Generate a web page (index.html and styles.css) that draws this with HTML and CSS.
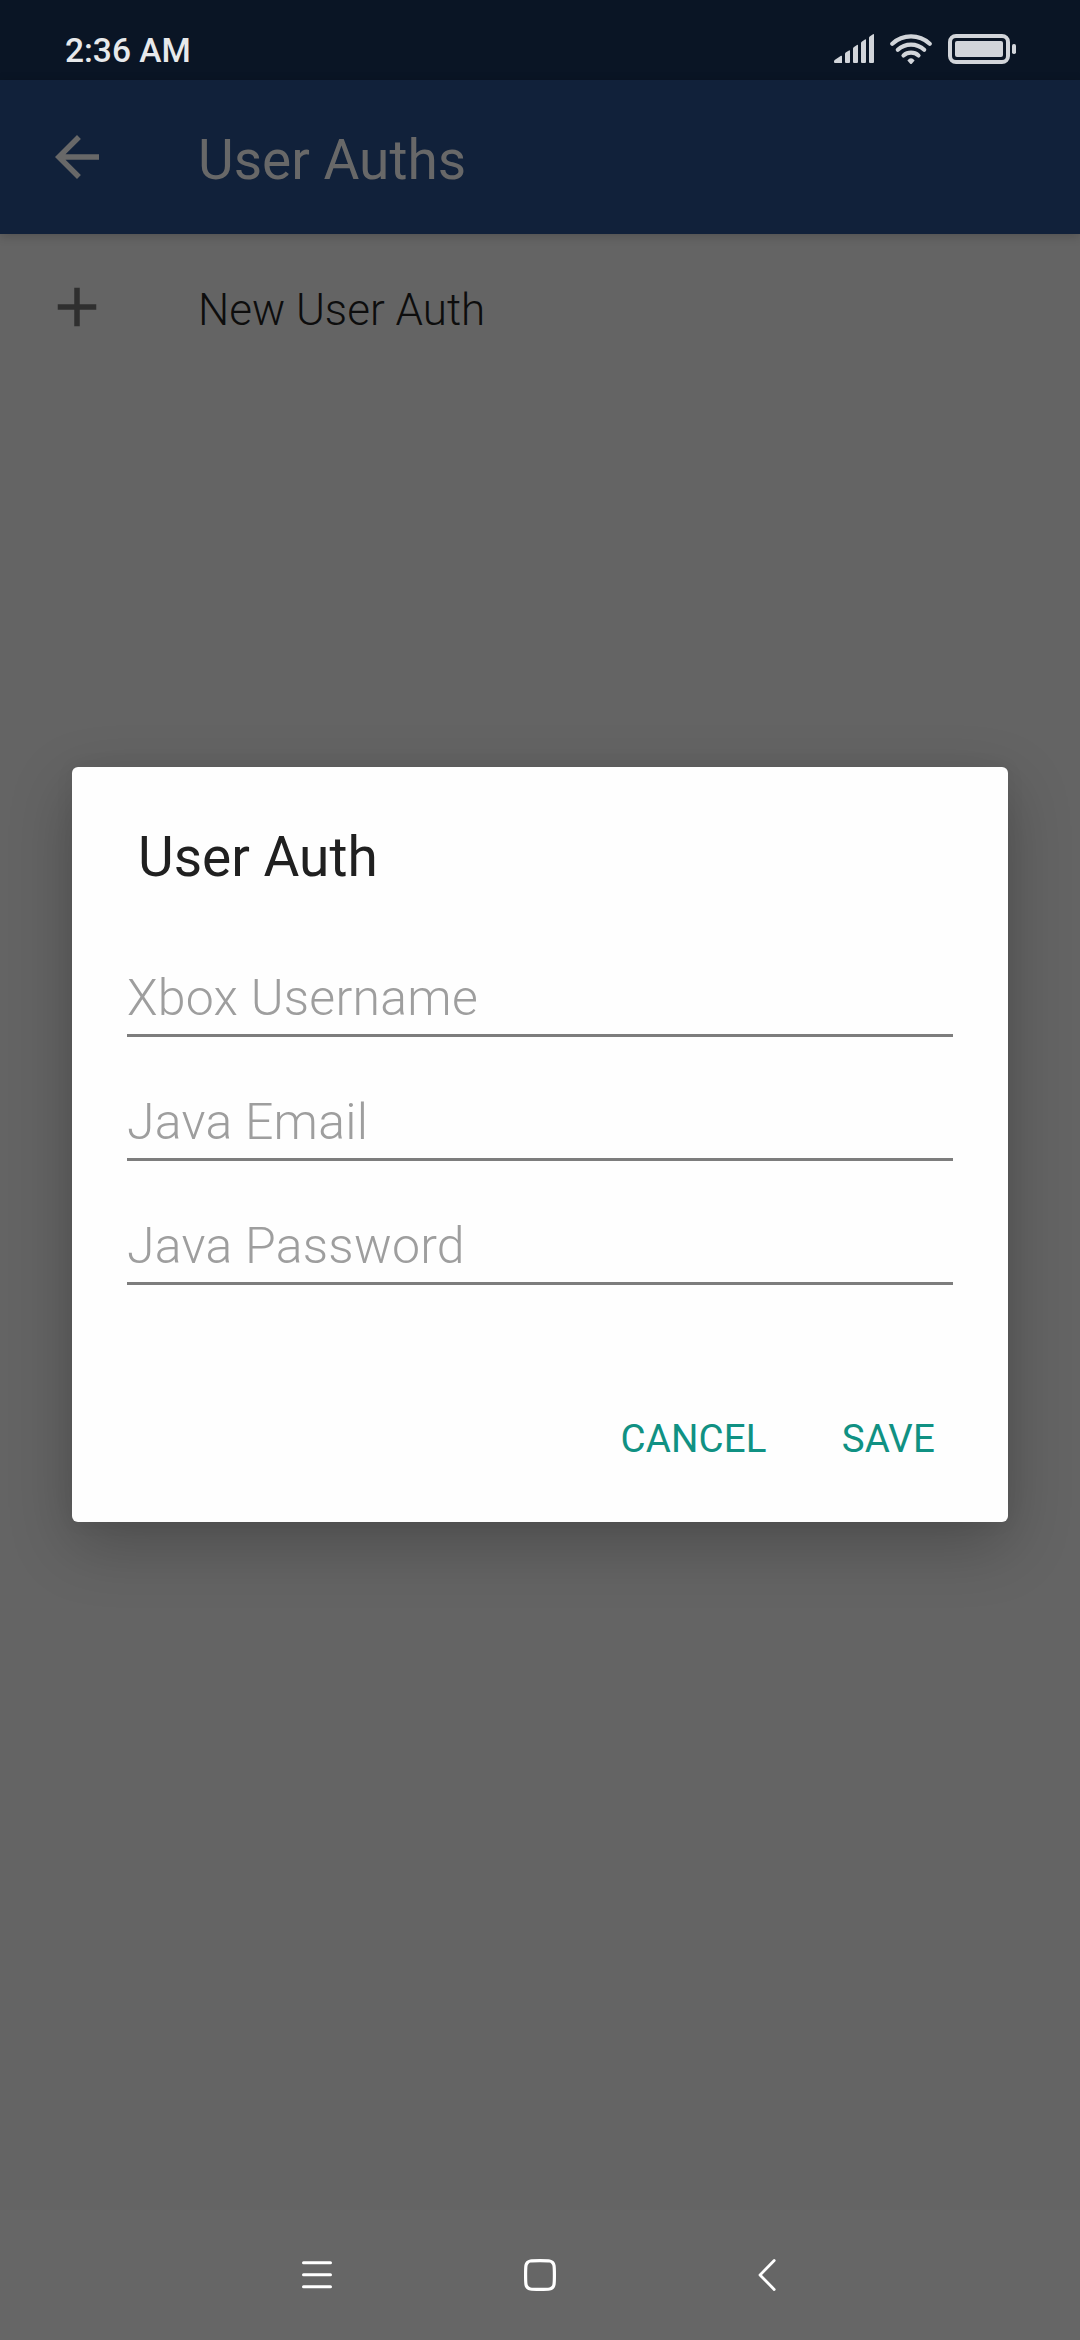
FILE: index.html
```html
<!DOCTYPE html>
<html lang="en">
<head>
<meta charset="utf-8">
<title>User Auths</title>
<link rel="stylesheet" href="styles.css">
</head>
<body>
<div class="screen">
  <header class="status-bar">
    <span class="clock">2:36 AM</span>
    <div class="status-icons">
      <svg class="signal" width="40" height="30" viewBox="0 0 40 30" fill="currentColor">
        <path d="M0 27.4Q0 26.4 1 25.8L7 21.8Q8 21.3 8 22.4V29H1Q0 29 0 28z"/>
        <path d="M11 20Q11 19 12 18.3L15 16.5Q16 16 16 17V28Q16 29 15 29H12Q11 29 11 28z"/>
        <path d="M19 14.5Q19 13.5 20 12.9L23 11Q24 10.5 24 11.5V28Q24 29 23 29H20Q19 29 19 28z"/>
        <path d="M27 9Q27 8 28 7.4L31 5.5Q32 5 32 6V28Q32 29 31 29H28Q27 29 27 28z"/>
        <path d="M35 3.8Q35 2.8 36 2.2L39 .2Q40-.3 40 .8V28Q40 29 39 29H36Q35 29 35 28z"/>
      </svg>
      <svg class="wifi" width="42" height="30" viewBox="0 0 42 30" fill="none" stroke="currentColor" stroke-width="4.2" stroke-linecap="round">
        <path d="M2.3 9.7A27.5 27.5 0 0 1 39.7 9.7"/>
        <path d="M7.8 15.8A19.5 19.5 0 0 1 34.2 15.8"/>
        <path d="M13.5 21.5A11.5 11.5 0 0 1 28.5 21.5"/>
        <path d="M17.4 26.4Q21 22.2 24.600 26.400L22 29.400Q21 30.400 20 29.400z" fill="currentColor" stroke="none"/>
      </svg>
      <svg class="battery" width="68" height="30" viewBox="0 0 68 30">
        <rect x="2" y="2" width="58" height="26" rx="6" fill="none" stroke="currentColor" stroke-width="4"/>
        <rect x="7" y="7" width="48" height="16" rx="2" fill="currentColor"/>
        <rect x="64" y="10" width="4" height="10" rx="1.8" fill="currentColor"/>
      </svg>
    </div>
  </header>
  <div class="app-bar">
    <svg class="icon" viewBox="0 0 24 24" fill="currentColor"><path d="M20 11H7.83l5.59-5.59L12 4l-8 8 8 8 1.41-1.41L7.83 13H20v-2z"/></svg>
    <h1 class="app-title">User Auths</h1>
  </div>
  <main class="content">
    <div class="list-row">
      <svg class="icon add" viewBox="0 0 24 24" fill="currentColor"><path d="M19 13h-6v6h-2v-6H5v-2h6V5h2v6h6v2z"/></svg>
      <span class="row-label">New User Auth</span>
    </div>
  </main>
  <nav class="nav-bar">
    <svg width="30" height="32" viewBox="0 0 30 32" fill="none" stroke="currentColor" stroke-width="3" stroke-linecap="round"><path d="M1.5 3.7h27M1.5 15.8h27M1.5 27.8h27"/></svg>
    <svg width="32" height="32" viewBox="0 0 32 32" fill="none" stroke="currentColor" stroke-width="3.2"><path d="M16 1.6C26.5 1.6 27 2 28.5 3.5 30 5 30.4 6 30.4 16S30 27 28.5 28.5 26.5 30.4 16 30.4 5 30 3.5 28.5 1.6 26.5 1.6 16 2 5 3.5 3.5 5.5 1.6 16 1.6z"/></svg>
    <svg width="18" height="32" viewBox="0 0 18 32" fill="none" stroke="currentColor" stroke-width="2.8" stroke-linecap="round" stroke-linejoin="round"><path d="M16.2 1.6L2 16l14.200 14.400"/></svg>
  </nav>
  <div class="overlay">
    <section class="dialog" role="dialog">
      <h2 class="dialog-title">User Auth</h2>
      <div class="fields">
        <div class="field">Xbox Username</div>
        <div class="field">Java Email</div>
        <div class="field">Java Password</div>
      </div>
      <div class="actions">
        <span class="action">CANCEL</span>
        <span class="action">SAVE</span>
      </div>
    </section>
  </div>
</div>
</body>
</html>
```
FILE: styles.css
```css
* { box-sizing: border-box; }
body { margin: 0; font-family: Roboto, sans-serif; }
h1, h2 { margin: 0; font-weight: 400; }
svg { display: block; flex: none; }

.screen {
  position: relative;
  display: flex;
  flex-direction: column;
  width: 1080px;
  height: 2340px;
  overflow: hidden;
  background: #646464;
}

.status-bar {
  display: flex;
  justify-content: space-between;
  height: 80px;
  padding: 30px 64px 0 65px;
  background: #0a1525;
  color: #d2d5da;
}
.clock {
  padding-top: 1px;
  color: #e7e9eb;
  font-size: 33.5px;
  font-weight: 500;
  line-height: 40px;
}
.status-icons { display: flex; align-items: flex-start; padding-top: 4px; }
.wifi { margin-left: 16px; }
.battery { margin-left: 16px; }

.app-bar {
  display: flex;
  align-items: center;
  height: 154px;
  padding: 0 44px;
  gap: 88px;
  background: #11213a;
  color: #686868;
  box-shadow: 0 2px 10px rgba(0, 0, 0, .2);
}
.icon { width: 66px; height: 66px; }
.app-title { padding-top: 6px; font-size: 55px; line-height: 64px; }

.content { flex: 1; }
.list-row {
  display: flex;
  align-items: center;
  height: 146px;
  padding: 0 44px;
  gap: 88px;
}
.add { color: #2f2f2f; }
.row-label {
  padding-top: 6px;
  color: #0d0d0d;
  font-size: 44px;
  font-weight: 300;
  line-height: 52px;
}

.nav-bar {
  display: flex;
  justify-content: center;
  align-items: center;
  height: 130px;
  padding-right: 2px;
  background: #666;
  color: #fff;
}
.nav-bar svg:nth-child(2) { margin: 0 202px 0 192px; }

.overlay {
  position: absolute;
  inset: 0;
  display: flex;
  align-items: flex-start;
  padding: 767px 72px 0;
}
.dialog {
  width: 936px;
  height: 755px;
  border-radius: 6px;
  background: #fefefe;
  box-shadow: 0 22px 64px rgba(0, 0, 0, .24), 0 0 20px rgba(0, 0, 0, .05);
}
.dialog-title {
  padding: 58px 66px 0;
  color: #202020;
  font-size: 55px;
  line-height: 64px;
}
.fields { padding: 24px 55px 0; }
.field {
  height: 124px;
  padding-top: 56px;
  border-bottom: 3px solid #7d7d7d;
  color: #9e9e9e;
  font-size: 50px;
  font-weight: 300;
  line-height: 58px;
  letter-spacing: .25px;
}
.actions {
  display: flex;
  justify-content: flex-end;
  gap: 75px;
  padding: 131px 73px 0;
}
.action { color: #109183; font-size: 38.5px; line-height: 46px; letter-spacing: .15px; }
```
